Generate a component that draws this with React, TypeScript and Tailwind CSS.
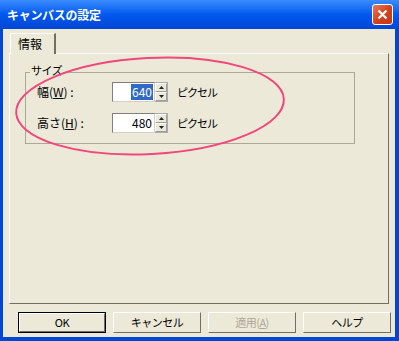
const font = { fontFamily: '"MS UI Gothic", "Noto Sans CJK JP", sans-serif' };

function Spin() {
  return (
    <div className="flex flex-col w-[13px] h-[20px] border-y border-r border-[#a5acb5] bg-[#ece9d8]">
      <div className="flex-1 flex items-center justify-center border border-t-white border-l-white border-r-[#9d9d9d] border-b-[#9d9d9d]">
        <svg width="5" height="3" viewBox="0 0 5 3"><path d="M2.5 0 L5 3 L0 3Z" fill="#222" /></svg>
      </div>
      <div className="flex-1 flex items-center justify-center border border-t-white border-l-white border-r-[#9d9d9d] border-b-[#9d9d9d]">
        <svg width="5" height="3" viewBox="0 0 5 3"><path d="M0 0 L5 0 L2.5 3Z" fill="#222" /></svg>
      </div>
    </div>
  );
}

function Field({ value, selected }: { value: string; selected?: boolean }) {
  return (
    <div className="flex">
      <div className="w-[43px] h-[20px] bg-white border border-t-[#7f7f7f] border-l-[#7f7f7f] border-r-[#d4d0c8] border-b-[#d4d0c8] flex items-center justify-end pr-[1px] text-[12px] leading-none">
        {selected ? <span className="bg-[#316ac5] text-white px-[1px] py-[2px]">{value}</span> : <span className="px-[1px]">{value}</span>}
      </div>
      <Spin />
    </div>
  );
}

function Btn({ label, primary, disabled }: { label: React.ReactNode; primary?: boolean; disabled?: boolean }) {
  return (
    <div className={`w-[88px] h-[21px] ${primary ? 'border border-black' : ''}`}>
      <div className="w-full h-full flex items-center justify-center text-[11px] tracking-[-0.5px] border border-t-white border-l-white border-r-[#716f64] border-b-[#716f64] bg-[#ece9d8]">
        <span className={disabled ? 'text-[#aca899]' : 'text-black'}>{label}</span>
      </div>
    </div>
  );
}

export default function App() {
  return (
    <div className="relative w-[399px] h-[341px] flex flex-col overflow-hidden" style={font}>
      <div className="h-[29px] flex items-center justify-between pl-[7px] pr-[6px] bg-gradient-to-b from-[#3a8cff] via-[#0058ee] to-[#0046d5]">
        <span className="text-white font-bold text-[12px] tracking-[-0.3px]">キャンバスの設定</span>
        <div className="w-[21px] h-[21px] rounded-[3px] border border-white bg-gradient-to-br from-[#e47a5a] via-[#d7411b] to-[#c0391a] flex items-center justify-center">
          <svg width="11" height="11" viewBox="0 0 11 11"><path d="M1.5 1.5 L9.5 9.5 M9.5 1.5 L1.5 9.5" stroke="white" strokeWidth="2.2" /></svg>
        </div>
      </div>
      <div className="flex-1 flex flex-col bg-[#ece9d8] border-l-[3px] border-r-[4px] border-b-[4px] border-[#0046d5]">
        <div className="ml-[7px] mt-[4px] w-[46px] h-[21px] relative z-10 bg-[#ece9d8] border-t border-l border-t-white border-l-white border-r-2 border-r-[#716f64] flex items-center pl-[7px] text-[12px]">
          情報
        </div>
        <div className="ml-[6px] mt-[-1px] w-[380px] h-[251px] border border-t-white border-l-white border-r-[#716f64] border-b-[#716f64] pt-[18px] pl-[15px]">
          <div className="relative w-[330px] h-[72px] border border-[#aca899]">
            <span className="absolute left-[4px] top-[-8px] bg-[#ece9d8] px-[1px] text-[11px] tracking-[-0.5px] leading-none">サイズ</span>
            <div className="flex flex-col pt-[9px] pl-[11px] gap-[11px] text-[12px]">
              <div className="flex items-center h-[20px]">
                <span className="w-[75px]">幅(<span className="underline">W</span>) :</span>
                <Field value="640" selected />
                <span className="ml-[9px] text-[11px] tracking-[-1px]">ピクセル</span>
              </div>
              <div className="flex items-center h-[20px]">
                <span className="w-[75px]">高さ(<span className="underline">H</span>) :</span>
                <Field value="480" />
                <span className="ml-[9px] text-[11px] tracking-[-1px]">ピクセル</span>
              </div>
            </div>
          </div>
        </div>
        <div className="flex gap-[7px] ml-[15px] mt-[8px]">
          <Btn label="OK" primary />
          <Btn label="キャンセル" />
          <Btn label={<>適用(<span className="underline">A</span>)</>} disabled />
          <Btn label="ヘルプ" />
        </div>
      </div>
      <svg className="absolute left-0 top-0 pointer-events-none" width="399" height="341">
        <ellipse cx="150" cy="106" rx="134" ry="48" transform="rotate(-3 150 106)" fill="none" stroke="#f0487a" strokeWidth="2" />
      </svg>
    </div>
  );
}
